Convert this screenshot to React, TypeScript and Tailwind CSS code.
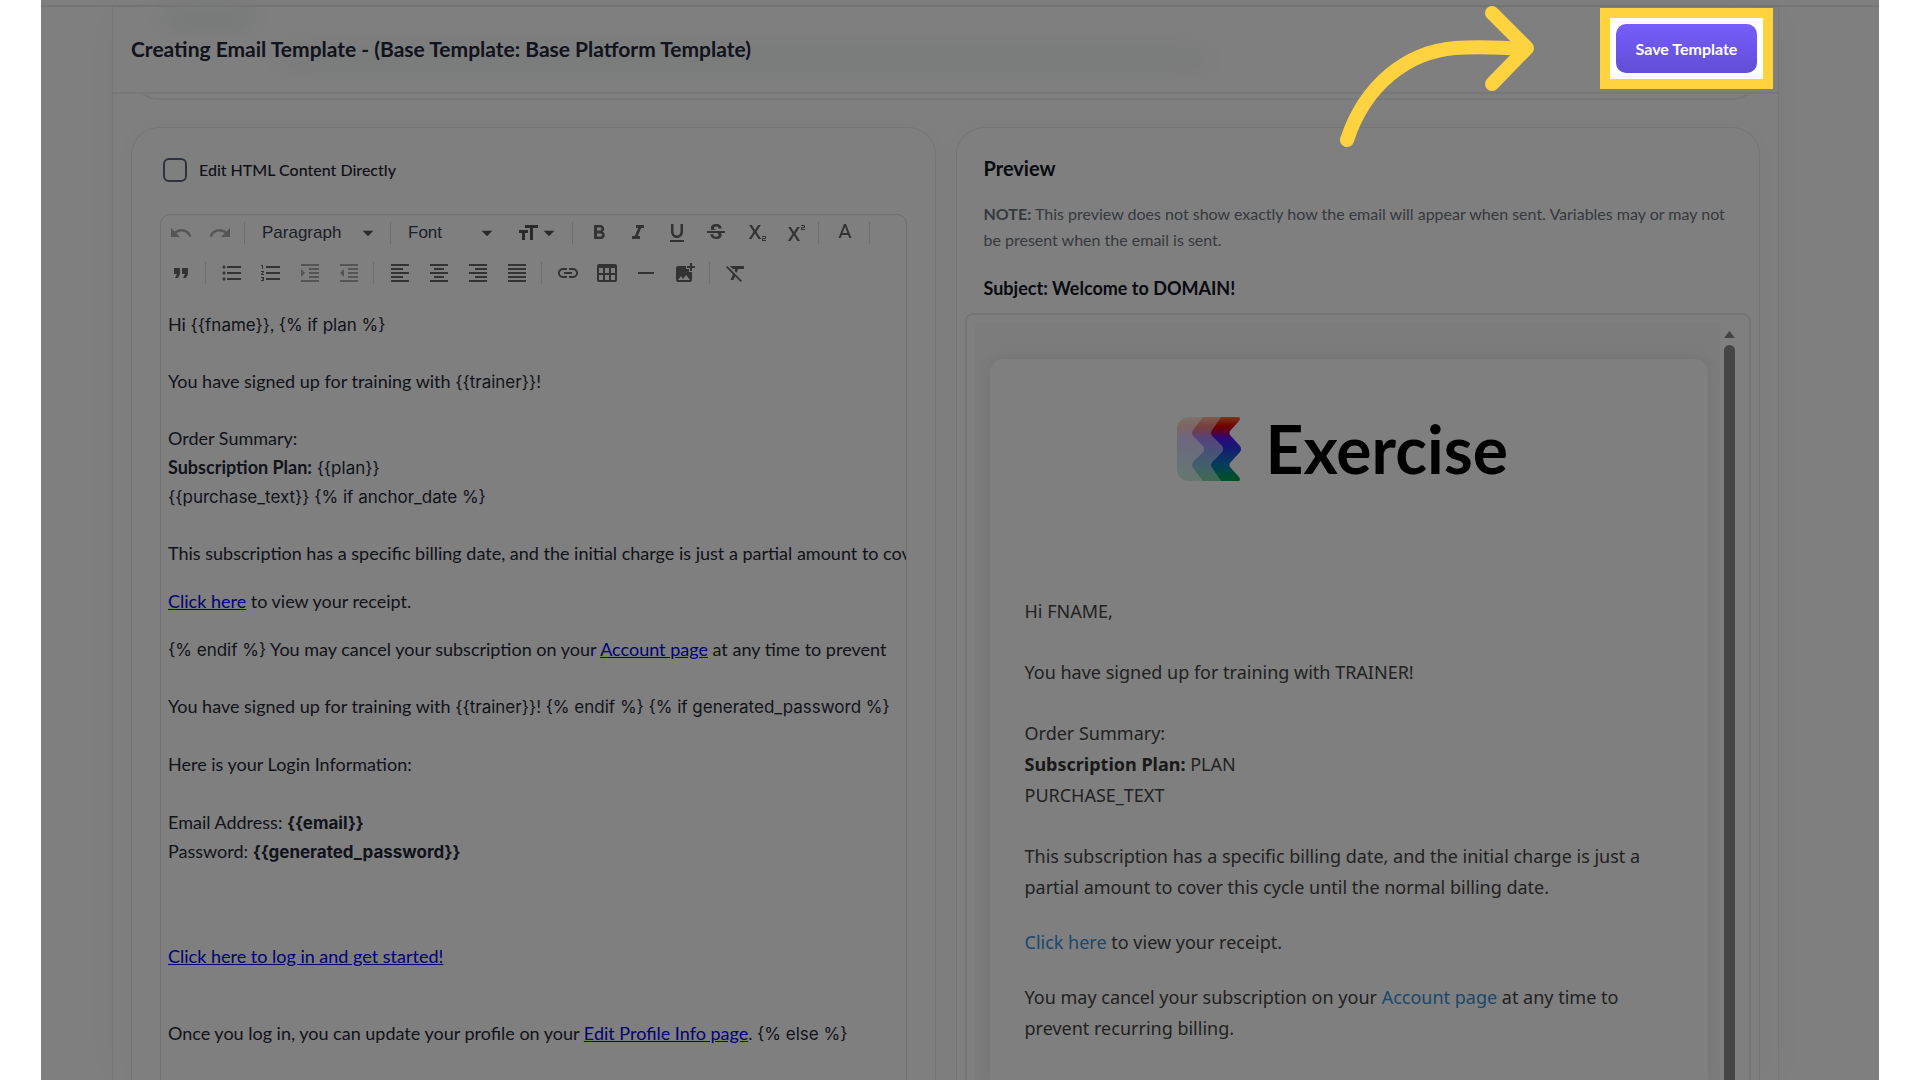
import type { ReactNode } from 'react';
import type { IconType } from 'react-icons';
import {
  MdAddPhotoAlternate,
  MdArrowDropDown,
  MdFormatAlignCenter,
  MdFormatAlignJustify,
  MdFormatAlignLeft,
  MdFormatAlignRight,
  MdFormatBold,
  MdFormatClear,
  MdFormatIndentDecrease,
  MdFormatIndentIncrease,
  MdFormatItalic,
  MdFormatListBulleted,
  MdFormatListNumbered,
  MdFormatQuote,
  MdFormatSize,
  MdFormatUnderlined,
  MdHorizontalRule,
  MdLink,
  MdRedo,
  MdStrikethroughS,
  MdSubscript,
  MdSuperscript,
  MdUndo,
} from 'react-icons/md';

function TextColorIcon() {
  return (
    <svg viewBox="0 0 24 24" className="size-6" fill="currentColor" aria-hidden="true">
      <path d="M11 3L5.5 17h2.25l1.12-3h6.25l1.12 3h2.25L13 3h-2zm-1.38 9L12 5.67 14.38 12H9.62z" />
    </svg>
  );
}

function TableIcon() {
  return (
    <svg viewBox="0 0 24 24" className="size-6" fill="currentColor" aria-hidden="true">
      <path
        fillRule="evenodd"
        d="M4 3h16a2 2 0 0 1 2 2v14a2 2 0 0 1-2 2H4a2 2 0 0 1-2-2V5a2 2 0 0 1 2-2zM4 7v5h4V7zm6 0v5h4V7zm6 0v5h4V7zM4 14v5h4v-5zm6 0v5h4v-5zm6 0v5h4v-5z"
      />
    </svg>
  );
}

function Tool({ label, icon: Icon, disabled }: { label: string; icon: IconType | (() => ReactNode); disabled?: boolean }) {
  return (
    <button
      type="button"
      aria-label={label}
      disabled={disabled}
      className="flex h-8 w-[39px] items-center justify-center text-[#666] disabled:text-[#aaa]"
    >
      <Icon size={24} />
    </button>
  );
}

function Divider() {
  return <span className="ml-[5px] mr-1.5 h-[22px] w-px shrink-0 bg-[#dcdcdc]" />;
}

function ToolbarSelect({ label, value, className }: { label: string; value: string; className: string }) {
  return (
    <div className={`relative flex h-8 items-center ${className}`}>
      <select
        aria-label={label}
        defaultValue={value}
        className="h-full w-full appearance-none bg-transparent pl-[11px] font-['Liberation_Sans',sans-serif] text-[17px] text-[#374151]"
      >
        <option>{value}</option>
      </select>
      <MdArrowDropDown size={26} className="pointer-events-none absolute right-1 text-[#555]" />
    </div>
  );
}

function Toolbar() {
  return (
    <div className="flex flex-col gap-2 pt-0.5">
      <div className="flex items-center">
        <Tool label="Undo" icon={MdUndo} disabled />
        <Tool label="Redo" icon={MdRedo} disabled />
        <Divider />
        <ToolbarSelect label="Block style" value="Paragraph" className="w-[134px]" />
        <Divider />
        <ToolbarSelect label="Font family" value="Font" className="w-[107px]" />
        <button type="button" aria-label="Font size" className="flex h-8 w-[63px] items-center pl-3 text-[#555]">
          <MdFormatSize size={24} />
          <MdArrowDropDown size={26} className="-ml-1" />
        </button>
        <Divider />
        <Tool label="Bold" icon={MdFormatBold} />
        <Tool label="Italic" icon={MdFormatItalic} />
        <Tool label="Underline" icon={MdFormatUnderlined} />
        <Tool label="Strikethrough" icon={MdStrikethroughS} />
        <Tool label="Subscript" icon={MdSubscript} />
        <Tool label="Superscript" icon={MdSuperscript} />
        <Divider />
        <Tool label="Text color" icon={TextColorIcon} />
        <Divider />
      </div>
      <div className="flex items-center">
        <Tool label="Quote" icon={MdFormatQuote} />
        <Divider />
        <Tool label="Bulleted list" icon={MdFormatListBulleted} />
        <Tool label="Numbered list" icon={MdFormatListNumbered} />
        <Tool label="Indent" icon={MdFormatIndentIncrease} disabled />
        <Tool label="Outdent" icon={MdFormatIndentDecrease} disabled />
        <Divider />
        <Tool label="Align left" icon={MdFormatAlignLeft} />
        <Tool label="Align center" icon={MdFormatAlignCenter} />
        <Tool label="Align right" icon={MdFormatAlignRight} />
        <Tool label="Justify" icon={MdFormatAlignJustify} />
        <Divider />
        <Tool label="Link" icon={MdLink} />
        <Tool label="Table" icon={TableIcon} />
        <Tool label="Horizontal line" icon={MdHorizontalRule} />
        <Tool label="Insert image" icon={MdAddPhotoAlternate} />
        <Divider />
        <Tool label="Clear formatting" icon={MdFormatClear} />
      </div>
    </div>
  );
}

function EditorLink({ children }: { children: ReactNode }) {
  return (
    <a href="#" className="text-[#0000ee] underline">
      {children}
    </a>
  );
}

// Template variables and conditionals
function Tag({ children }: { children: string }) {
  return <span className="font-['Inter',sans-serif] text-[17px] leading-none">{children}</span>;
}

function EditorBody() {
  return (
    <div
      role="textbox"
      aria-multiline="true"
      aria-label="Email content"
      className="mt-[21px] whitespace-nowrap pl-[7px] text-[18px] leading-[29px] text-[#1f2937]"
    >
      <p>
        Hi <Tag>{'{{fname}}'}</Tag>, <Tag>{'{% if plan %}'}</Tag>
      </p>
      <p className="mt-7">
        You have signed up for training with <Tag>{'{{trainer}}'}</Tag>!
      </p>
      <p className="mt-7">Order Summary:</p>
      <p>
        <strong>Subscription Plan:</strong> <Tag>{'{{plan}}'}</Tag>
      </p>
      <p>
        <Tag>{'{{purchase_text}}'}</Tag> <Tag>{'{% if anchor_date %}'}</Tag>
      </p>
      <p className="mt-7">
        This subscription has a specific billing date, and the initial charge is just a partial amount to cover this cycle
      </p>
      <p className="mt-[19px]">
        <EditorLink>Click here</EditorLink> to view your receipt.
      </p>
      <p className="mt-[19px]">
        <Tag>{'{% endif %}'}</Tag> You may cancel your subscription on your <EditorLink>Account page</EditorLink> at any
        time to prevent
      </p>
      <p className="mt-7">
        You have signed up for training with <Tag>{'{{trainer}}'}</Tag>! <Tag>{'{% endif %}'}</Tag>{' '}
        <Tag>{'{% if generated_password %}'}</Tag>
      </p>
      <p className="mt-[29px]">Here is your Login Information:</p>
      <p className="mt-[29px]">
        Email Address:{' '}
        <strong>
          <Tag>{'{{email}}'}</Tag>
        </strong>
      </p>
      <p>
        Password:{' '}
        <strong>
          <Tag>{'{{generated_password}}'}</Tag>
        </strong>
      </p>
      <p className="mt-[76px]">
        <EditorLink>Click here to log in and get started!</EditorLink>
      </p>
      <p className="mt-12">
        Once you log in, you can update your profile on your <EditorLink>Edit Profile Info page</EditorLink>.{' '}
        <Tag>{'{% else %}'}</Tag>
      </p>
    </div>
  );
}

function Logo() {
  return (
    <svg viewBox="0 0 64 64" className="size-16" aria-hidden="true">
      <defs>
        <linearGradient id="spectrum" x1="0" y1="0" x2="0" y2="64" gradientUnits="userSpaceOnUse">
          <stop offset="0" stopColor="#f0703c" />
          <stop offset="0.14" stopColor="#e60000" />
          <stop offset="0.24" stopColor="#a80060" />
          <stop offset="0.33" stopColor="#5a10f0" />
          <stop offset="0.5" stopColor="#2838e8" />
          <stop offset="0.7" stopColor="#1070c0" />
          <stop offset="0.84" stopColor="#009090" />
          <stop offset="0.96" stopColor="#00a050" />
        </linearGradient>
      </defs>
      <g fill="url(#spectrum)">
        <path
          opacity="0.2"
          d="M12 0H26L16 13Q14 16 16 19L26 29Q28 32 26 35L16 45Q14 48 16 51L26 64H12A12 12 0 0 1 0 52V12A12 12 0 0 1 12 0Z"
        />
        <path
          opacity="0.5"
          d="M26 0H44L35 13Q33 16 35 19L45 29Q47 32 45 35L35 45Q33 48 35 51L44 64H26L16 51Q14 48 16 45L26 35Q28 32 26 29L16 19Q14 16 16 13Z"
        />
        <path d="M44 0H62Q64 1 62 4L53 14Q52 16 53 18L63 29Q65 32 63 35L53 46Q52 48 53 50L62 60Q64 63 62 64H44L35 51Q33 48 35 45L45 35Q47 32 45 29L35 19Q33 16 35 13Z" />
      </g>
    </svg>
  );
}

function EmailLink({ children }: { children: ReactNode }) {
  return (
    <a href="#" className="text-[#3490dc]">
      {children}
    </a>
  );
}

function EmailPreview() {
  return (
    <div className="mt-3 flex flex-1 gap-1 overflow-hidden rounded-t-lg border-2 border-b-0 border-[#ebebeb] px-2 pt-2">
      <div className="flex flex-1 flex-col bg-[#f8f8f8] pl-[15px] pr-3 pt-9">
        <div className="flex-1 rounded-t-[14px] bg-white px-[35px] pt-[58px] shadow-[0_0_14px_rgba(0,0,0,0.08)]">
          <div className="flex items-center justify-center gap-6 pr-3">
            <Logo />
            <span className="text-[66px] font-bold leading-[64px] text-black">Exercise</span>
          </div>
          <div className="mt-[115px] font-['Noto_Sans',sans-serif] text-[18px] leading-[31px] text-[#444]">
            <p>Hi FNAME,</p>
            <p className="mt-[30px]">You have signed up for training with TRAINER!</p>
            <p className="mt-[30px]">Order Summary:</p>
            <p>
              <strong className="text-[#333]">Subscription Plan:</strong> PLAN
            </p>
            <p>PURCHASE_TEXT</p>
            <p className="mt-[30px]">
              This subscription has a specific billing date, and the initial charge is just a partial amount to cover this
              cycle until the normal billing date.
            </p>
            <p className="mt-6">
              <EmailLink>Click here</EmailLink> to view your receipt.
            </p>
            <p className="mt-6">
              You may cancel your subscription on your <EmailLink>Account page</EmailLink> at any time to prevent recurring
              billing.
            </p>
          </div>
        </div>
      </div>
      <div className="mr-1.5 flex w-[11px] flex-col items-center pt-2 text-[#888]">
        <svg viewBox="0 0 11 7" className="h-[7px] w-[11px]" fill="currentColor" aria-hidden="true">
          <path d="M5.5 0L11 7H0z" />
        </svg>
        <div className="mt-[7px] w-full flex-1 rounded-t-full bg-[#8a8a8a]" />
      </div>
    </div>
  );
}

function Header() {
  return (
    <header className="relative flex h-[87px] shrink-0 items-center justify-between border-b-2 border-[#f0f0f0] pb-0.5 pl-[18px] pr-[5px]">
      <div className="absolute left-12 top-0 h-6 w-24 rounded-full bg-[#eef0f0] blur-md" />
      <div className="absolute left-[160px] top-9 h-8 w-[940px] rounded-full bg-[#f5f6f6] blur-md" />
      <h1 className="relative text-[21px] font-bold leading-7 text-[#23263a]">
        Creating Email Template - (Base Template: Base Platform Template)
      </h1>
      <div className="relative z-20 border-[10px] border-[#ffd23f] bg-white p-1.5">
        <button
          type="button"
          className="h-[49px] w-[141px] rounded-[10px] bg-linear-to-b from-[#765dfb] to-[#624ed6] text-base font-bold text-white"
        >
          Save Template
        </button>
      </div>
    </header>
  );
}

export default function App() {
  return (
    <div className="h-screen overflow-hidden bg-white font-['Lato',sans-serif]">
      <main className="relative mx-[41px] flex h-full flex-col">
        <div className="h-[7px] shrink-0 border-b-2 border-[#ececec]" />
        <div className="ml-[71px] mr-[100px] flex flex-1 flex-col border-x border-[#ececec] shadow-[0_0_40px_rgba(0,0,0,0.04)]">
          <Header />
          <div className="flex h-[6px] shrink-0 items-end overflow-hidden px-[18px]">
            <div className="h-14 flex-1 rounded-b-[28px] border-2 border-[#efefef]" />
          </div>
          <div className="grid flex-1 grid-cols-2 gap-5 px-[18px] pt-[27px]">
            <section className="rounded-t-[28px] border border-b-0 border-[#ebebeb] bg-white px-7 pt-[30px] shadow-[0_0_28px_rgba(0,0,0,0.04)]">
              <label className="ml-[3px] flex items-center gap-3 text-[16px] leading-6 font-medium text-[#1f2230]">
                <input
                  type="checkbox"
                  className="size-6 appearance-none rounded-md border-2 border-[#5b6579] bg-white"
                />
                Edit HTML Content Directly
              </label>
              <div className="mt-8 h-full overflow-hidden rounded-t-[10px] border border-[#dfdfdf]">
                <Toolbar />
                <EditorBody />
              </div>
            </section>
            <section className="flex flex-col rounded-t-[28px] border border-b-0 border-[#ebebeb] bg-white px-2 pt-[27px] shadow-[0_0_28px_rgba(0,0,0,0.04)]">
              <div className="px-[19px]">
                <h2 className="text-[20px] font-bold leading-[26px] text-[#111424]">Preview</h2>
                <p className="mt-5 text-[16px] leading-[26px] text-[#6b7280]">
                  <strong>NOTE:</strong> This preview does not show exactly how the email will appear when sent. Variables
                  may or may not be present when the email is sent.
                </p>
                <p className="mt-[22px] text-[18px] font-bold leading-[26px] text-[#111424]">
                  Subject: Welcome to DOMAIN!
                </p>
              </div>
              <EmailPreview />
            </section>
          </div>
        </div>
        <div className="pointer-events-none absolute inset-0 z-10 bg-black/50" />
        <svg
          viewBox="0 0 200 150"
          className="pointer-events-none absolute right-[338px] top-0 z-20 h-[150px] w-[200px] overflow-visible"
          fill="none"
          stroke="#ffd23f"
          strokeWidth="14"
          strokeLinecap="round"
          strokeLinejoin="round"
          aria-hidden="true"
        >
          <path d="M6 140C24 85 66 52 114 48Q142 46 184 49" />
          <path d="M151 13L186 48L151 84" />
        </svg>
      </main>
    </div>
  );
}
